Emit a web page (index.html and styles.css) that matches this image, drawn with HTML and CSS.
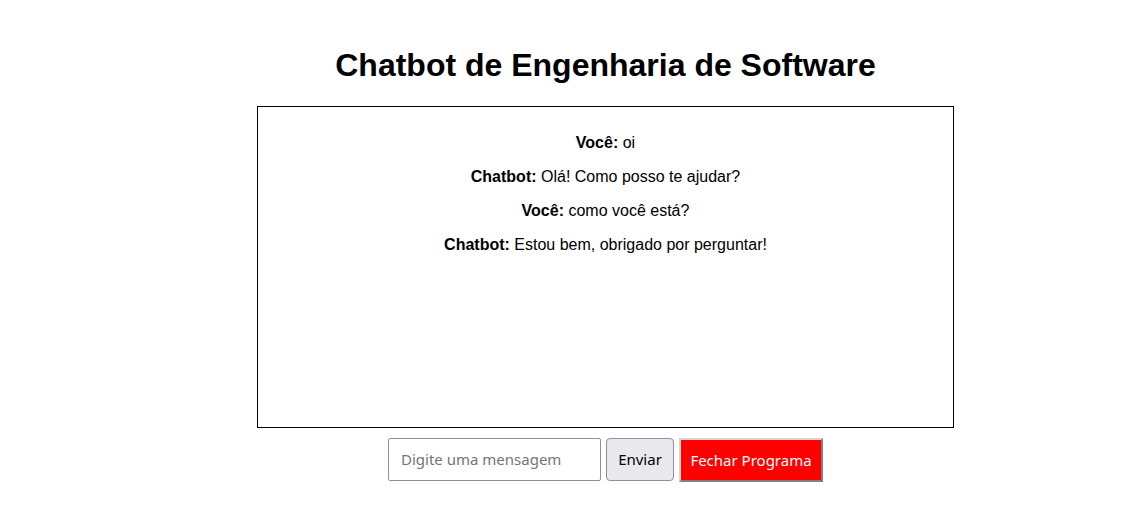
FILE: index.html
```html
<!DOCTYPE html>
<html lang="pt-BR">
<head>
<meta charset="utf-8">
<title>Chatbot de Engenharia de Software</title>
<link rel="stylesheet" href="styles.css">
</head>
<body>
  <main class="app">
    <h1 class="title">Chatbot de Engenharia de Software</h1>
    <div class="chat">
      <p class="msg"><strong>Você:</strong> oi</p>
      <p class="msg"><strong>Chatbot:</strong> Olá! Como posso te ajudar?</p>
      <p class="msg"><strong>Você:</strong> como você está?</p>
      <p class="msg"><strong>Chatbot:</strong> Estou bem, obrigado por perguntar!</p>
    </div>
    <div class="controls">
      <input class="input" type="text" placeholder="Digite uma mensagem">
      <button class="btn btn-send" type="button">Enviar</button>
      <button class="btn btn-close" type="button">Fechar Programa</button>
    </div>
  </main>
</body>
</html>
```
FILE: styles.css
```css
html, body {
  margin: 0;
  padding: 0;
  background: #ffffff;
}

body {
  font-family: "Liberation Sans", Arial, sans-serif;
  color: #000000;
}

.app {
  display: flex;
  flex-direction: column;
  align-items: center;
  padding: 0 0 0 80px;
  text-align: center;
}

.title {
  font-size: 32px;
  font-weight: bold;
  margin: 47px 0 22px;
  line-height: 36.8px;
}

.chat {
  width: 675px;
  height: 299px;
  padding: 11px 10px 10px;
  border: 1px solid #000000;
  overflow-y: auto;
  font-size: 16px;
}

.msg {
  margin: 16px 0;
  line-height: 18px;
}

.controls {
  display: flex;
  gap: 5px;
  margin-top: 10px;
  align-items: flex-start;
}

.input {
  box-sizing: border-box;
  width: 213px;
  height: 43px;
  padding: 0 12px;
  border: 1px solid #8f8f9d;
  border-radius: 2px;
  font-family: "Noto Sans", sans-serif;
  font-size: 15px;
  color: #000;
  background: #fff;
}

.input::placeholder {
  color: #757575;
}

.btn {
  box-sizing: border-box;
  height: 43px;
  font-family: "Noto Sans", sans-serif;
  font-size: 15px;
  cursor: pointer;
}

.btn-send {
  width: 68px;
  padding: 0 10px;
  background: #e9e9ed;
  border: 1px solid #8f8f9d;
  border-radius: 4px;
  color: #000;
}

.btn-close {
  width: 144px;
  height: 44px;
  padding: 0 8px;
  background: #ff0000;
  color: #ffffff;
  border: 2px outset #d4d4d4;
  border-radius: 0;
}
```
